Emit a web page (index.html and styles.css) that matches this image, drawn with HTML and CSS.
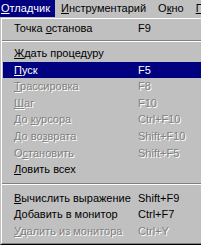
FILE: index.html
```html
<!DOCTYPE html>
<html lang="ru">
<head>
<meta charset="utf-8">
<title>Отладчик</title>
<link rel="stylesheet" href="styles.css">
</head>
<body>
<div class="menubar">
  <span class="mb-item active"><u>О</u>тладчик</span>
  <span class="mb-item"><u>И</u>нструментарий</span>
  <span class="mb-item">О<u>к</u>но</span>
  <span class="mb-item"><u>П</u>омощь</span>
</div>
<div class="menu">
  <div class="menu-in">
    <div class="item"><span class="label">Точка <u>о</u>станова</span><span class="key">F9</span></div>
    <div class="sep sep1"></div>
    <div class="item"><span class="label"><u>Ж</u>дать процедуру</span></div>
    <div class="item hl"><span class="label"><u>П</u>уск</span><span class="key">F5</span></div>
    <div class="item dis"><span class="label"><u>Т</u>рассировка</span><span class="key">F8</span></div>
    <div class="item dis"><span class="label"><u>Ш</u>аг</span><span class="key">F10</span></div>
    <div class="item dis"><span class="label">До <u>к</u>урсора</span><span class="key">Ctrl+F10</span></div>
    <div class="item dis"><span class="label">До во<u>з</u>врата</span><span class="key">Shift+F10</span></div>
    <div class="item dis"><span class="label">О<u>с</u>тановить</span><span class="key">Shift+F5</span></div>
    <div class="item"><span class="label"><u>Л</u>овить всех</span></div>
    <div class="sep sep2"></div>
    <div class="item"><span class="label"><u>В</u>ычислить выражение</span><span class="key">Shift+F9</span></div>
    <div class="item"><span class="label"><u>Д</u>обавить в монитор</span><span class="key">Ctrl+F7</span></div>
    <div class="item dis"><span class="label"><u>У</u>далить из монитора</span><span class="key">Ctrl+Y</span></div>
  </div>
</div>
</body>
</html>
```
FILE: styles.css
```css
html, body {
  margin: 0;
  padding: 0;
  width: 201px;
  height: 245px;
  overflow: hidden;
  background: #c0c0c0;
}
body {
  font-family: "Liberation Sans", Arial, sans-serif;
  font-size: 11px;
  color: #000;
  display: flex;
  flex-direction: column;
}
u {
  text-decoration: underline;
  text-underline-offset: 1px;
}
.menubar {
  flex: none;
  display: flex;
  height: 17px;
  line-height: 17px;
  white-space: nowrap;
}
.mb-item {
  padding: 0 6px;
}
.mb-item.active {
  background: #000080;
  color: #fff;
  padding: 0 5px 0 1px;
}
.menu {
  flex: 1;
  width: 240px;
  display: flex;
  border-top: 1px solid #c0c0c0;
  border-left: 1px solid #c0c0c0;
  border-bottom: 1px solid #000;
}
.menu-in {
  flex: 1;
  display: flex;
  flex-direction: column;
  border-top: 1px solid #fff;
  border-left: 1px solid #fff;
  border-bottom: 1px solid #808080;
  padding: 1px 0 0 1px;
}
.item {
  display: flex;
  height: 16.6px;
  line-height: 16.6px;
  padding-left: 11px;
  white-space: nowrap;
}
.label {
  width: 124px;
  flex: none;
}
.item.hl {
  background: #000080;
  color: #fff;
}
.item.dis {
  color: #808080;
  text-shadow: 1px 1px 0 #fff;
}
.sep::before {
  content: "";
  display: block;
  margin-left: -1px;
  border-top: 1px solid #808080;
  border-bottom: 1px solid #fff;
}
.sep1 {
  height: 8.5px;
  padding-top: 3px;
  box-sizing: border-box;
}
.sep2 {
  height: 12px;
  padding-top: 5px;
  box-sizing: border-box;
}
```
